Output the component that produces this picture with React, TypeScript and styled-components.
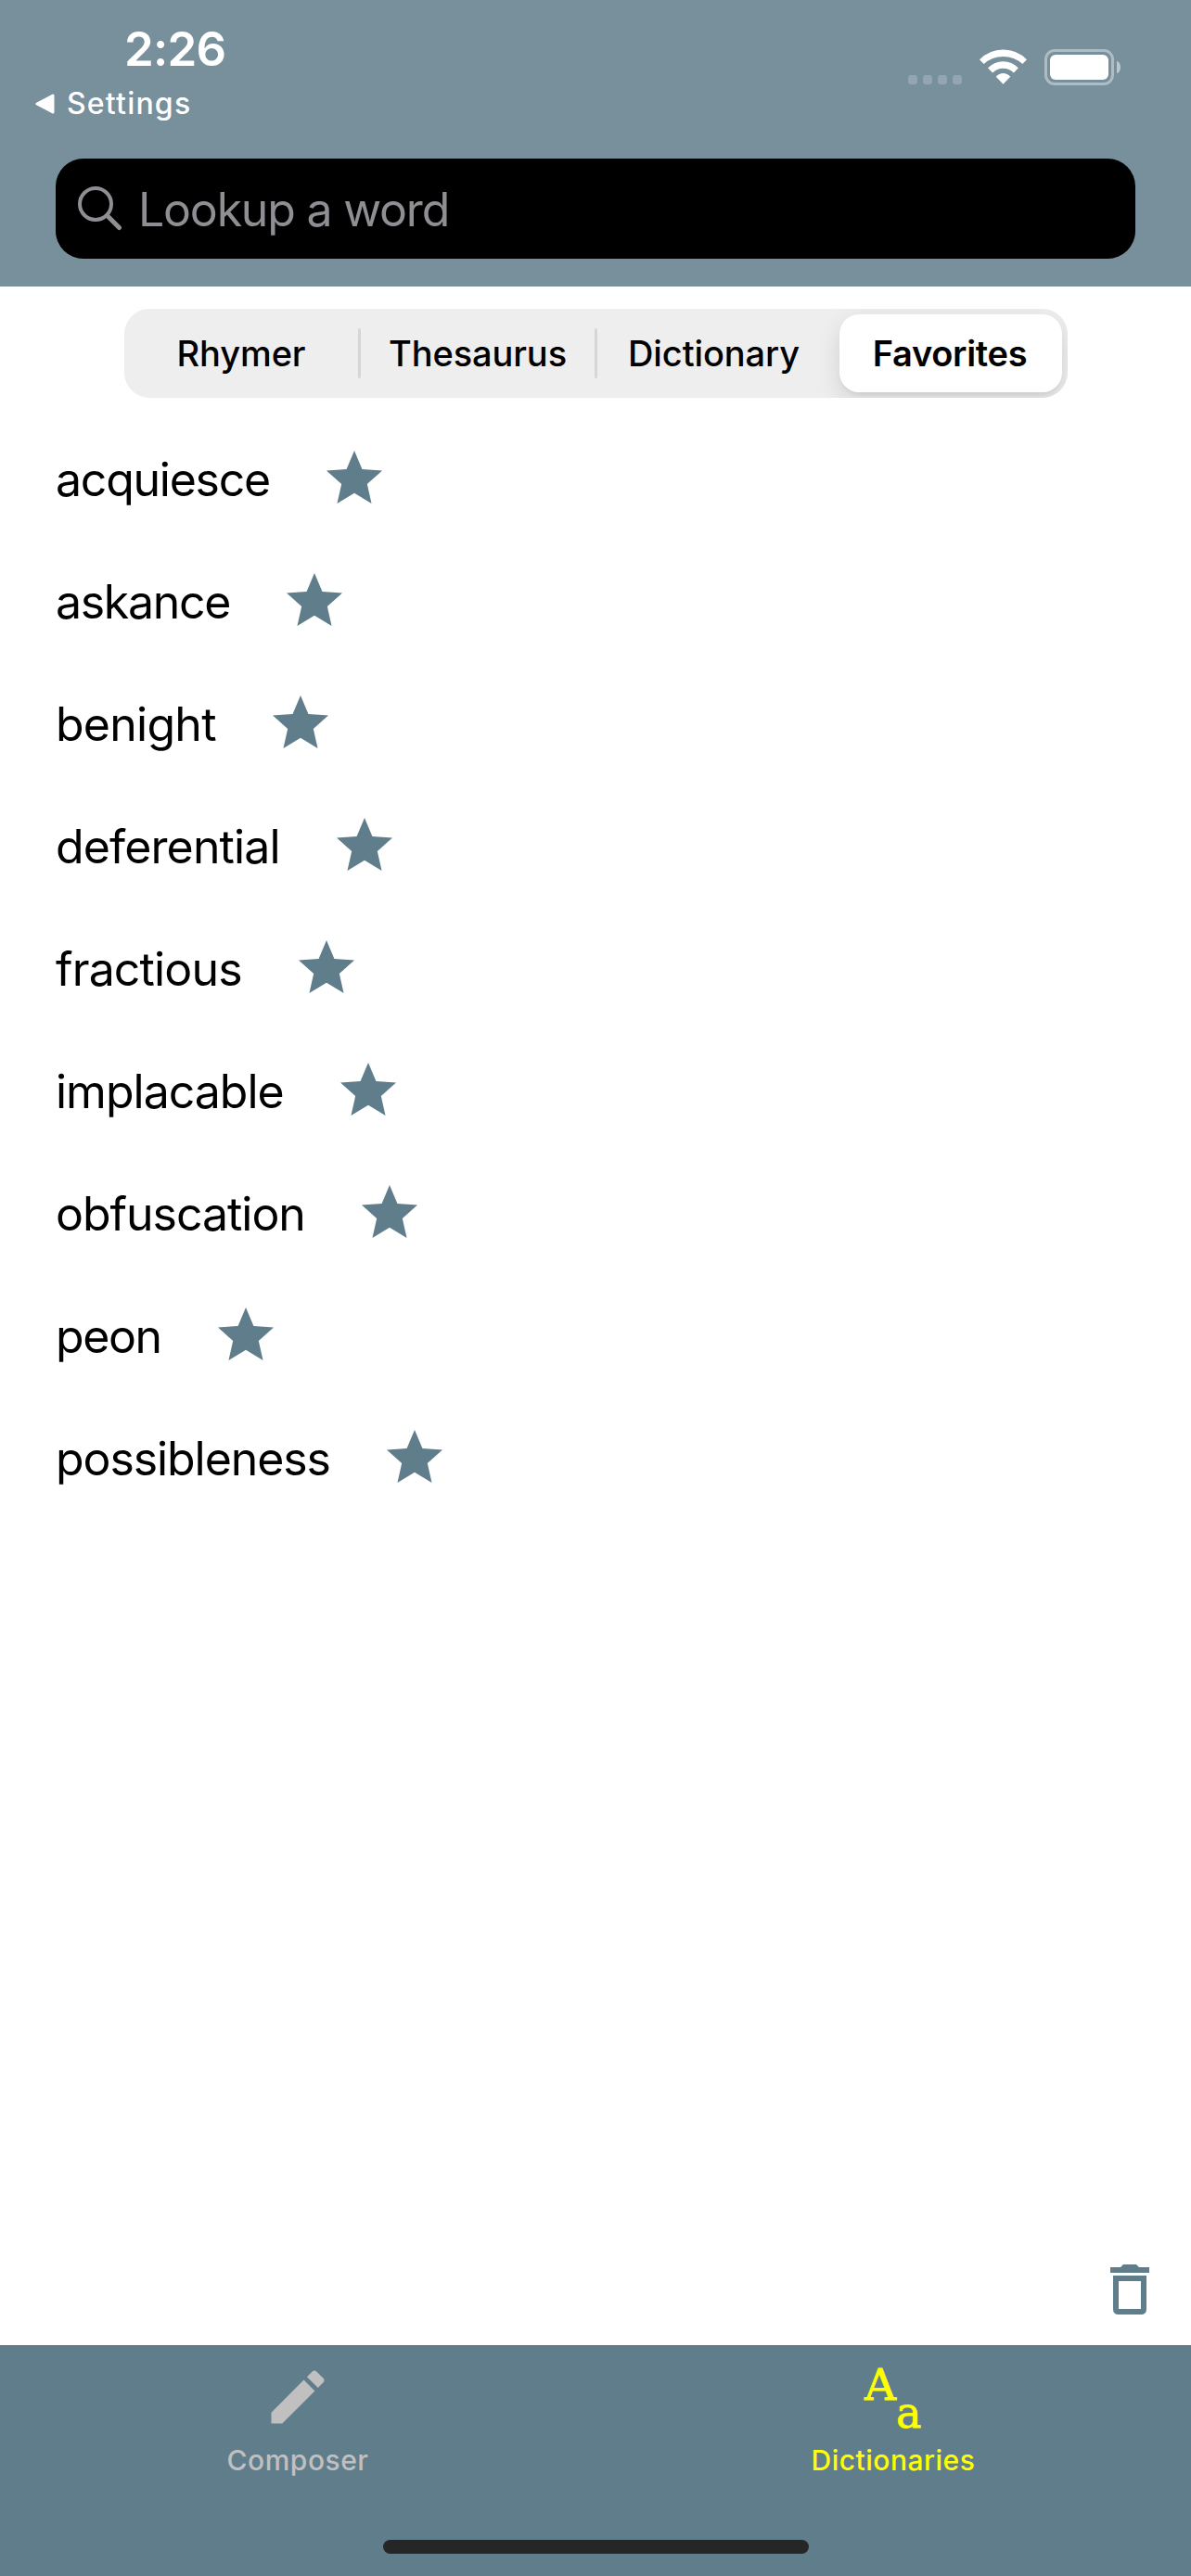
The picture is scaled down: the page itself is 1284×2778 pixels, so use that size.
import React from "react";
import styled, { createGlobalStyle } from "styled-components";

const slate = "#607d8b";

const GlobalStyle = createGlobalStyle`
  * { box-sizing: border-box; }
  html, body { margin: 0; padding: 0; background: #fff; }
  body { font-family: Inter, "Liberation Sans", sans-serif; -webkit-font-smoothing: antialiased; }
`;

const Screen = styled.div`
  width: 1284px;
  height: 2778px;
  display: flex;
  flex-direction: column;
  background: #fff;
  overflow: hidden;
`;

const Header = styled.header`
  height: 309px;
  flex: none;
  background: #78909c;
  display: flex;
  flex-direction: column;
`;

const StatusBar = styled.div`
  height: 171px;
  display: flex;
  justify-content: space-between;
  color: #fff;
`;

const StatusLeft = styled.div`
  padding: 23px 0 0 38px;
`;

const Clock = styled.div`
  padding-left: 96px;
  font-size: 51px;
  line-height: 60px;
  font-weight: 600;
  letter-spacing: -0.8px;
`;

const BackLink = styled.div`
  display: flex;
  align-items: center;
  gap: 13px;
  margin-top: 9px;
  font-size: 32px;
  line-height: 40px;
  font-weight: 500;
  letter-spacing: 1.2px;
`;

const StatusRight = styled.div`
  display: flex;
  align-items: flex-start;
  padding: 53px 76px 0 0;
`;

const SignalDots = styled.div`
  display: flex;
  gap: 6px;
  padding-top: 28px;
  margin-right: 19px;
`;

const Dot = styled.span`
  width: 10px;
  height: 10px;
  border-radius: 3px;
  background: rgba(255, 255, 255, 0.2);
`;

const Battery = styled.div`
  width: 75px;
  height: 39px;
  margin-left: 19px;
  padding: 3px;
  border: 3px solid rgba(255, 255, 255, 0.4);
  border-radius: 11px;
`;

const BatteryLevel = styled.div`
  height: 27px;
  border-radius: 6px;
  background: #fff;
`;

const BatteryCap = styled.div`
  width: 4px;
  height: 13px;
  margin: 13px 0 0 3px;
  border-radius: 0 4px 4px 0 / 0 6.5px 6.5px 0;
  background: rgba(255, 255, 255, 0.5);
`;

const SearchField = styled.div`
  height: 108px;
  margin: 0 60px;
  padding-left: 24px;
  display: flex;
  align-items: center;
  gap: 17px;
  border-radius: 30px;
  background: #000;
  color: #8e8e93;
`;

const Placeholder = styled.span`
  padding-top: 2px;
  font-size: 50px;
  letter-spacing: -1.2px;
`;

const Segments = styled.div`
  flex: none;
  width: 1017px;
  height: 96px;
  margin: 24px 0 0 134px;
  display: flex;
  align-items: center;
  padding-right: 6px;
  border-radius: 27px;
  background: #eee;
  overflow: hidden;
`;

const Segment = styled.div<{ $width: number }>`
  width: ${(p) => p.$width}px;
  text-align: center;
  font-size: 38px;
  font-weight: 450;
  letter-spacing: -0.1px;
`;

const SelectedSegment = styled(Segment)`
  height: 84px;
  margin-left: auto;
  padding-right: 2px;
  line-height: 84px;
  font-weight: 600;
  letter-spacing: -0.3px;
  border-radius: 21px;
  background: #fff;
  box-shadow: 0 9px 24px rgba(0, 0, 0, 0.12), 0 3px 3px rgba(0, 0, 0, 0.04);
`;

const Divider = styled.span`
  width: 3px;
  height: 54px;
  border-radius: 2px;
  background: #d6d6d8;
`;

const WordList = styled.ul`
  flex: 1;
  margin: 0;
  padding: 21px 0 0 60px;
  list-style: none;
`;

const WordRow = styled.li`
  height: 132px;
  display: flex;
  align-items: center;
`;

const Word = styled.span<{ $tracking: number }>`
  padding-top: 2px;
  font-size: 50px;
  line-height: 60px;
  letter-spacing: ${(p) => p.$tracking}px;
`;

const StarSlot = styled.span`
  display: flex;
  margin: 0 0 4px 61px;
`;

const Actions = styled.div`
  height: 87px;
  padding-right: 45px;
  display: flex;
  justify-content: flex-end;
`;

const TabBar = styled.nav`
  height: 249px;
  flex: none;
  background: ${slate};
  display: flex;
  flex-wrap: wrap;
  justify-content: center;
  align-content: flex-start;
`;

const Tab = styled.div<{ $color: string }>`
  width: 642px;
  height: 210px;
  padding-top: 18px;
  display: flex;
  flex-direction: column;
  align-items: center;
  color: ${(p) => p.$color};
`;

const TabIcon = styled.div`
  height: 78px;
  display: flex;
`;

const TabLabel = styled.span<{ $tracking: number }>`
  margin-top: 10px;
  font-size: 30px;
  line-height: 36px;
  font-weight: 500;
  letter-spacing: ${(p) => p.$tracking}px;
`;

const LetterPair = styled.div`
  display: flex;
  width: 62px;
  font-family: "DejaVu Serif", serif;
  line-height: 46px;
  -webkit-text-stroke: 0.8px currentColor;
`;

const UpperLetter = styled.span`
  margin-top: 2px;
  font-size: 47px;
`;

const LowerLetter = styled.span`
  font-size: 46px;
  margin-top: 32px;
`;

const HomeIndicator = styled.div`
  width: 459px;
  height: 15px;
  border-radius: 8px;
  background: #262626;
`;

const words = [
  { text: "acquiesce", tracking: -1.25 },
  { text: "askance", tracking: -1.3 },
  { text: "benight", tracking: -0.75 },
  { text: "deferential", tracking: -0.87 },
  { text: "fractious", tracking: -0.85 },
  { text: "implacable", tracking: -1.0 },
  { text: "obfuscation", tracking: -1.03 },
  { text: "peon", tracking: -1.4 },
  { text: "possibleness", tracking: -1.08 },
];

const Star = () => (
  <svg width="60" height="57" viewBox="0 0 178 169" fill={slate}>
    <path d="M89 0 114 59 178 64 130 107 144 169 89 136 34 169 48 107 0 64 64 59Z" />
  </svg>
);

const WifiIcon = () => (
  <svg width="51" height="38" viewBox="0 0 152 112" fill="#fff">
    <path d="M0 33Q32 1 76 1T152 33L138 47Q112 23 76 23T14 47Z" />
    <path d="M27 60Q48 39 76 39T125 60L110 75Q96 61 76 61T42 75Z" />
    <path d="M53 88Q63 77 76 77T99 88L76 112Z" />
  </svg>
);

export default function App() {
  return (
    <>
      <GlobalStyle />
      <Screen>
        <Header>
          <StatusBar>
            <StatusLeft>
              <Clock>2:26</Clock>
              <BackLink>
                <svg width="21" height="22" viewBox="0 0 21 22">
                  <path d="M2 11 19 2V20Z" fill="#fff" stroke="#fff" strokeWidth="3" strokeLinejoin="round" />
                </svg>
                Settings
              </BackLink>
            </StatusLeft>
            <StatusRight>
              <SignalDots>
                <Dot />
                <Dot />
                <Dot />
                <Dot />
              </SignalDots>
              <WifiIcon />
              <Battery>
                <BatteryLevel />
              </Battery>
              <BatteryCap />
            </StatusRight>
          </StatusBar>
          <SearchField>
            <svg width="48" height="48" viewBox="0 0 48 48" fill="none" stroke="#8e8e93">
              <circle cx="19" cy="19" r="17" strokeWidth="4" />
              <path d="M31.5 31.5 44.5 44.5" strokeWidth="5" strokeLinecap="round" />
            </svg>
            <Placeholder>Lookup a word</Placeholder>
          </SearchField>
        </Header>
        <Segments>
          <Segment $width={252}>Rhymer</Segment>
          <Divider />
          <Segment $width={252}>Thesaurus</Segment>
          <Divider />
          <Segment $width={251}>Dictionary</Segment>
          <SelectedSegment $width={240}>Favorites</SelectedSegment>
        </Segments>
        <WordList>
          {words.map((w) => (
            <WordRow key={w.text}>
              <Word $tracking={w.tracking}>{w.text}</Word>
              <StarSlot>
                <Star />
              </StarSlot>
            </WordRow>
          ))}
        </WordList>
        <Actions>
          <svg width="42" height="54" viewBox="0 0 42 54" fill={slate}>
            <path d="M0 3H11L14 0H28L31 3H42V9H0Z" />
            <path fillRule="evenodd" d="M3 12H39V48Q39 54 33 54H9Q3 54 3 48ZM9 18V48H33V18Z" />
          </svg>
        </Actions>
        <TabBar>
          <Tab $color="#c0c0c0">
            <TabIcon>
              <svg width="76" height="76" viewBox="0 0 24 24" fill="currentColor">
                <path d="M3 17.25V21h3.75L17.81 9.94l-3.75-3.75L3 17.25zM20.71 7.04c.39-.39.39-1.02 0-1.41l-2.34-2.34c-.39-.39-1.02-.39-1.41 0l-1.83 1.83 3.75 3.75 1.83-1.83z" />
              </svg>
            </TabIcon>
            <TabLabel $tracking={0.5}>Composer</TabLabel>
          </Tab>
          <Tab $color="#ffff00">
            <TabIcon>
              <LetterPair>
                <UpperLetter>A</UpperLetter>
                <LowerLetter>a</LowerLetter>
              </LetterPair>
            </TabIcon>
            <TabLabel $tracking={0.5}>Dictionaries</TabLabel>
          </Tab>
          <HomeIndicator />
        </TabBar>
      </Screen>
    </>
  );
}
